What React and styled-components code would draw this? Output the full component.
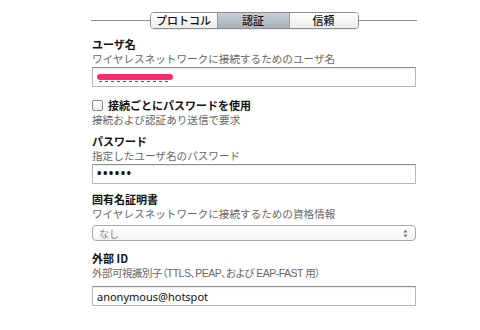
import React from "react";
import styled, { createGlobalStyle } from "styled-components";

const GlobalStyle = createGlobalStyle`
  html, body {
    margin: 0;
    padding: 0;
    background: #fff;
  }
  body {
    font-family: "Noto Sans CJK JP", "Noto Sans", sans-serif;
    color: #111;
  }
`;

const Page = styled.div`
  width: 480px;
  height: 330px;
  padding: 12px 0 0 91px;
  box-sizing: border-box;
`;

const Panel = styled.div`
  width: 326px;
  display: flex;
  flex-direction: column;
`;

// Tab header
const TabBar = styled.div`
  display: flex;
  align-items: center;
  height: 17px;
`;

const Rule = styled.div`
  flex: 1;
  height: 1px;
  background: #8c8c8c;
`;

const Segments = styled.div`
  display: flex;
  height: 17px;
  border: 1px solid #8e8e8e;
  border-radius: 4px;
  overflow: hidden;
  box-sizing: border-box;
  box-shadow: 0 1px 0 rgba(0, 0, 0, 0.08);
`;

const Segment = styled.div`
  width: ${(p) => p.$w}px;
  display: flex;
  align-items: center;
  justify-content: center;
  font-size: 11px;
  line-height: 15px;
  font-weight: 500;
  color: #111;
  border-left: ${(p) => (p.$first ? "none" : "1px solid #9a9a9a")};
  background: ${(p) =>
    p.$active
      ? "linear-gradient(#c9ced6, #a9b1bd)"
      : "linear-gradient(#ffffff, #ececec)"};
`;

const Label = styled.div`
  margin-top: ${(p) => p.$mt}px;
  padding-left: 1px;
  font-size: 11px;
  line-height: 15px;
  font-weight: 700;
  color: #111;
`;

const Hint = styled.div`
  padding-left: 1px;
  font-size: ${(p) => (p.$latin ? "10.5px" : "10.6px")};
  line-height: 14px;
  color: #676767;
  font-family: ${(p) =>
    p.$latin
      ? '"Liberation Sans", "Noto Sans CJK JP", sans-serif'
      : '"Noto Sans CJK JP", sans-serif'};
  font-feature-settings: ${(p) => (p.$latin ? '"palt"' : "normal")};
  letter-spacing: ${(p) => (p.$latin ? "-0.5px" : "0")};
`;

const TextBox = styled.div`
  margin-top: ${(p) => p.$mt}px;
  margin-left: 1px;
  width: 324px;
  height: 20px;
  box-sizing: border-box;
  border: 1px solid #b8b8b8;
  border-top-color: #8f8f8f;
  box-shadow: inset 0 1px 1px rgba(0, 0, 0, 0.08);
  background: #fff;
  display: flex;
  align-items: center;
  padding-left: 4px;
  font-size: 11px;
  color: #111;
  font-family: "Noto Sans", "Noto Sans CJK JP", sans-serif;
`;

const Dots = styled.span`
  font-size: 12px;
  font-weight: 700;
  letter-spacing: 1.4px;
  line-height: 1;
`;

const CheckRow = styled.div`
  margin-top: 11px;
  padding-left: 1px;
  display: flex;
  align-items: center;
  gap: 5px;
  height: 15px;
`;

const Box = styled.div`
  width: 11px;
  height: 11px;
  box-sizing: border-box;
  border: 1px solid #8a8a8a;
  border-radius: 2px;
  background: linear-gradient(#fff, #ededed);
`;

const CheckLabel = styled.span`
  font-size: 11px;
  line-height: 15px;
  font-weight: 700;
`;

const Select = styled.div`
  margin-top: 4px;
  margin-left: 1px;
  width: 324px;
  height: 16px;
  box-sizing: border-box;
  border: 1px solid #a9a9a9;
  border-radius: 4px;
  background: linear-gradient(#fff, #f4f4f4);
  display: flex;
  align-items: center;
  justify-content: space-between;
  padding: 0 7px 0 6px;
  font-size: 10px;
  color: #888;
`;

const Redact = () => (
  <svg width="80" height="12" viewBox="0 0 80 12">
    <path d="M2 10.5 H74" stroke="#555" strokeWidth="1" strokeDasharray="3 3" />
    <path d="M3 6 H73" stroke="#ff2d6f" strokeWidth="6" strokeLinecap="round" />
  </svg>
);

const Arrows = () => (
  <svg width="5" height="9" viewBox="0 0 5 9">
    <path d="M2.5 0.5 L4.5 3.5 H0.5 Z" fill="#777" />
    <path d="M2.5 8.5 L4.5 5.5 H0.5 Z" fill="#777" />
  </svg>
);

export default function App() {
  return (
    <Page>
      <GlobalStyle />
      <Panel>
        <TabBar>
          <Rule />
          <Segments>
            <Segment $w={66} $first>プロトコル</Segment>
            <Segment $w={71} $active>認証</Segment>
            <Segment $w={68}>信頼</Segment>
          </Segments>
          <Rule />
        </TabBar>

        <Label $mt={8}>ユーザ名</Label>
        <Hint>ワイヤレスネットワークに接続するためのユーザ名</Hint>
        <TextBox $mt={1}>
          <Redact />
        </TextBox>

        <CheckRow>
          <Box />
          <CheckLabel>接続ごとにパスワードを使用</CheckLabel>
        </CheckRow>
        <Hint>接続および認証あり送信で要求</Hint>

        <Label $mt={7}>パスワード</Label>
        <Hint>指定したユーザ名のパスワード</Hint>
        <TextBox $mt={1}>
          <Dots>••••••</Dots>
        </TextBox>

        <Label $mt={8}>固有名証明書</Label>
        <Hint>ワイヤレスネットワークに接続するための資格情報</Hint>
        <Select>
          <span>なし</span>
          <Arrows />
        </Select>

        <Label $mt={10}>外部 ID</Label>
        <Hint $latin>外部可視識別子（TTLS、PEAP、および EAP-FAST 用）</Hint>
        <TextBox $mt={6}>anonymous@hotspot</TextBox>
      </Panel>
    </Page>
  );
}
